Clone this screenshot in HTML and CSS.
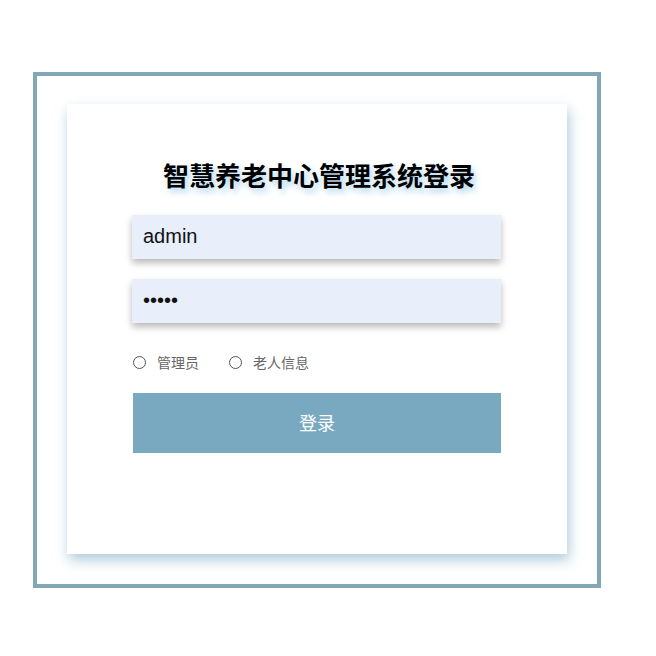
FILE: index.html
```html
<!DOCTYPE html>
<html lang="zh-CN">
<head>
<meta charset="utf-8">
<title>智慧养老中心管理系统登录</title>
<link rel="stylesheet" href="styles.css">
</head>
<body>
<div class="frame">
  <div class="card">
    <h1 class="title">智慧养老中心管理系统登录</h1>
    <form class="form">
      <input class="field" type="text" value="admin">
      <input class="field" type="password" value="12345">
      <div class="roles">
        <label class="role"><span class="radio"></span>管理员</label>
        <label class="role"><span class="radio"></span>老人信息</label>
      </div>
      <button class="submit" type="button">登录</button>
    </form>
  </div>
</div>
</body>
</html>
```
FILE: styles.css
```css
html, body {
  margin: 0;
  padding: 0;
  background: #fff;
}
body {
  padding: 72px 0 0 33px;
  font-family: "Liberation Sans", "Noto Sans CJK SC", sans-serif;
}
.frame {
  box-sizing: border-box;
  width: 568px;
  height: 516px;
  border: 4px solid #82a8b5;
  padding: 28px 0 0 30px;
}
.card {
  box-sizing: border-box;
  width: 500px;
  height: 450px;
  background: #fff;
  box-shadow: 2px 6px 12px rgba(110, 160, 190, 0.55);
  padding: 54px 0 0 66px;
}
.title {
  margin: 0 0 0 -64px;
  width: 500px;
  text-align: center;
  font-family: "Noto Sans CJK SC", sans-serif;
  font-weight: 700;
  font-size: 26px;
  line-height: 34px;
  color: #000;
  text-shadow: 3px 4px 6px rgba(150, 200, 230, 0.75);
}
.form {
  display: flex;
  flex-direction: column;
  width: 369px;
  margin-top: 23px;
}
.field {
  box-sizing: border-box;
  height: 44px;
  width: 369px;
  border: none;
  outline: none;
  background: #e8effb;
  box-shadow: 0 4px 7px rgba(0, 0, 0, 0.28);
  padding: 0 11px 2px;
  font-family: "Liberation Sans", sans-serif;
  font-size: 20px;
  color: #111;
  margin: 0 0 20px -1px;
}
.roles {
  display: flex;
  align-items: center;
  gap: 30px;
  height: 20px;
  margin-top: 9px;
}
.role {
  display: flex;
  align-items: center;
  gap: 11px;
  font-family: "Noto Sans CJK SC", sans-serif;
  font-size: 14px;
  color: #666;
}
.radio {
  box-sizing: border-box;
  width: 13px;
  height: 13px;
  border: 1px solid #555;
  border-radius: 50%;
  background: #fff;
}
.submit {
  margin-top: 21px;
  height: 60px;
  width: 368px;
  border: none;
  background: #79a9c1;
  color: #fff;
  font-family: "Noto Sans CJK SC", sans-serif;
  font-size: 18px;
  padding: 0 0 3px;
}
```
